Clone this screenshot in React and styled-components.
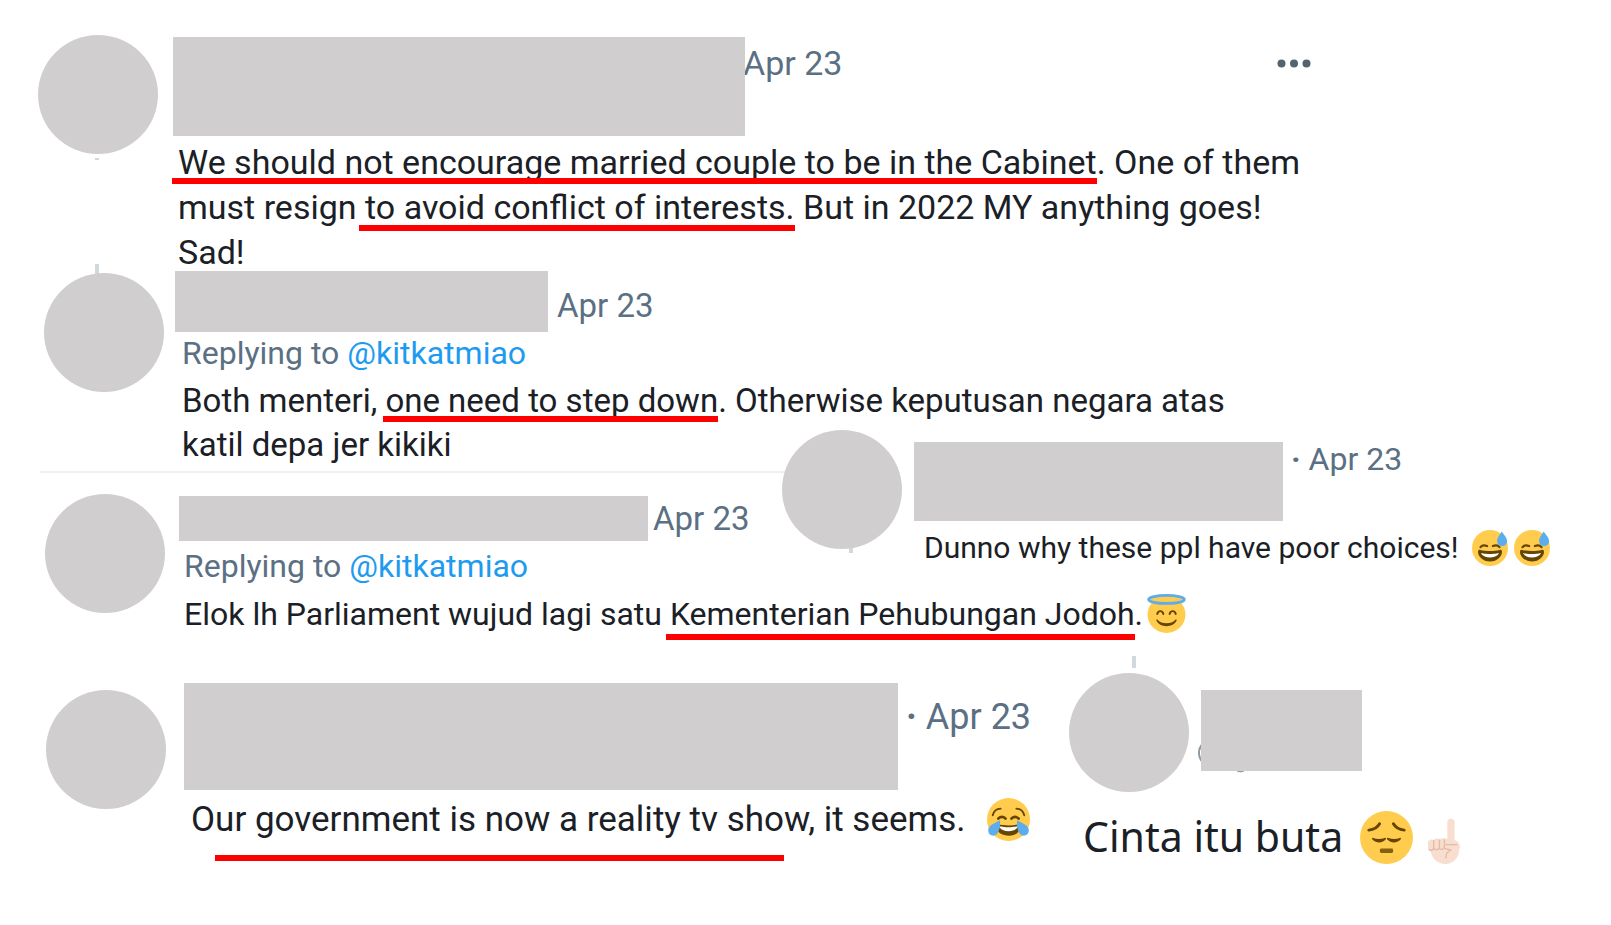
import React from 'react';
import styled, { createGlobalStyle } from 'styled-components';

const GlobalStyle = createGlobalStyle`
  *, *::before, *::after { box-sizing: border-box; }
  body { margin: 0; background: #fff; }
`;

const Page = styled.main`
  display: flex;
  flex-direction: column;
  min-height: 100vh;
  padding-top: 35px;
  overflow-x: hidden;
  font-family: Roboto, "Liberation Sans", sans-serif;
  color: #1a2026;
`;

const Overlay = styled.div`
  display: grid;
  align-items: start;
  justify-items: start;
  & > * { grid-area: 1 / 1; }
`;

const Row = styled.div`
  display: flex;
  align-items: flex-start;
`;

const Tweet = styled.article`
  display: flex;
  align-items: flex-start;
  gap: ${(p) => p.$gap}px;
  max-width: 1273px;
  margin-top: ${(p) => p.$top || 0}px;
  margin-left: ${(p) => p.$left}px;
`;

const StackedTweet = styled(Tweet)`
  flex-direction: column;
`;

const Body = styled.div`
  flex: 1;
  margin-top: ${(p) => p.$top || 0}px;
`;

const Head = styled.header`
  display: flex;
  align-items: flex-start;
`;

const AvatarSlot = styled.div`
  position: relative;
  flex: none;
  margin-top: ${(p) => p.$top || 0}px;
`;

const Avatar = styled.div`
  position: relative;
  width: 120px;
  height: 119px;
  border-radius: 50%;
  background: #d0cece;
`;

const Stem = styled.span`
  position: absolute;
  left: ${(p) => p.$x}px;
  top: ${(p) => p.$y}px;
  width: 4px;
  height: ${(p) => p.$h}px;
  background: #cfd9de;
`;

const NameSlot = styled.div`
  position: relative;
  flex: none;
  margin: 17px 0 0 12px;
`;

const NameBar = styled.div`
  position: relative;
  z-index: 1;
  flex: none;
  width: ${(p) => p.$w}px;
  height: ${(p) => p.$h}px;
  background: #d0cece;
`;

const HandleEdge = styled.svg`
  position: absolute;
  left: -3px;
  top: 50px;
  width: 60px;
  height: 33px;
`;

const When = styled.time`
  margin: ${(p) => p.$top}px 0 0 ${(p) => p.$left}px;
  font-size: ${(p) => p.$size || 33}px;
  line-height: 44px;
  white-space: nowrap;
  color: #5b7083;
`;

const MoreButton = styled.button`
  display: flex;
  margin: 22px 0 0 auto;
  padding: 0;
  border: 0;
  background: none;
  color: #536471;
`;

const ReplyTo = styled.p`
  margin: ${(p) => p.$top || 0}px 0 4px;
  padding-left: ${(p) => p.$indent}px;
  font-size: 32px;
  line-height: 44px;
  white-space: nowrap;
  color: #5b7083;
  a { color: #1d9bf0; text-decoration: none; }
`;

const Text = styled.p`
  margin: ${(p) => p.$top || 0}px 0 0;
  padding-left: ${(p) => p.$indent}px;
  font-size: ${(p) => p.$size}px;
  line-height: ${(p) => p.$line || 44}px;
  white-space: nowrap;
`;

const LargeText = styled(Text)`
  font-family: "Noto Sans", "Open Sans", sans-serif;
`;

const Marked = styled.span`
  position: relative;
  display: inline-block;
  &::after {
    content: "";
    position: absolute;
    left: -${(p) => p.$lead || 0}px;
    right: 0;
    top: ${(p) => p.$drop}px;
    height: 6px;
    background: #fe0000;
  }
`;

const Divider = styled.hr`
  width: 745px;
  height: 2px;
  margin: 4px 0 0 40px;
  border: 0;
  background: #ebf0f1;
`;

const Emoji = styled.svg`
  width: ${(p) => p.$s}px;
  height: ${(p) => p.$s}px;
  margin-left: ${(p) => p.$left || 0}px;
  vertical-align: ${(p) => p.$drop || -8}px;
`;

const Grin = (props) => (
  <Emoji viewBox="0 0 36 36" role="img" aria-label="grinning face with sweat" {...props}>
    <circle cx="18" cy="18" r="18" fill="#ffcc4d" />
    <path fill="none" stroke="#664500" strokeWidth="2.2" strokeLinecap="round" d="M8.500 17.200c1.200-1.700 3.200-2.600 6.600-1.200M20.900 16c3.400-1.400 5.400-.5 6.600 1.200" />
    <path fill="#664500" d="M18 21c-3.600 0-6.500-.4-9.900-1.100-.8-.1-2.100 0-2.100 2 0 4 4.600 9.600 12 9.600s12-5.600 12-9.600c0-2-1.300-2.100-2.100-2C24.500 20.600 21.600 21 18 21z" />
    <path fill="#fff" d="M9 23s3 1 9 1 9-1 9-1-1.500 4.500-9 4.500S9 23 9 23z" />
    <path fill="#5dadec" d="M35 10.200c.5 3-1.300 5.400-4.200 5.900-2.900.4-5.300-1.400-5.700-4.300C24.600 8.500 27.600 5.600 29.600 1.600c2.400 3.200 5 5.800 5.400 8.600z" />
  </Emoji>
);

const Angel = (props) => (
  <Emoji viewBox="0 0 36 36" role="img" aria-label="smiling face with halo" {...props}>
    <ellipse cx="18" cy="19" rx="17.500" ry="17" fill="#ffcc4d" />
    <ellipse cx="18" cy="5" rx="16.500" ry="3.700" fill="#ffcc4d" stroke="#5dadec" strokeWidth="2.600" />
    <path fill="none" stroke="#664500" strokeWidth="1.800" strokeLinecap="round" d="M9.500 18.500c.7-3.600 4.900-3.600 5.600 0M20.900 18.500c.7-3.600 4.900-3.600 5.600 0" />
    <path fill="#664500" d="M10 24c-.5-.8-1.700-.2-1.300.7C10.300 27.900 13.500 29.700 18 29.700s7.700-1.800 9.300-5c.4-.9-.8-1.500-1.300-.7-1.700 2-4.500 3-8 3s-6.300-1-8-3z" />
  </Emoji>
);

const Joy = (props) => (
  <Emoji viewBox="0 0 36 36" role="img" aria-label="face with tears of joy" {...props}>
    <circle cx="18" cy="18" r="18" fill="#ffcc4d" />
    <path fill="none" stroke="#664500" strokeWidth="1.500" strokeLinecap="round" d="M4.800 14.500c.7-3 3.200-5.500 6.600-5.600M31.200 14.500c-.7-3-3.200-5.500-6.600-5.600" />
    <path fill="none" stroke="#664500" strokeWidth="2.200" strokeLinecap="round" d="M9.500 17.200c2-1.800 4-1.800 6 0M20.500 17.200c2-1.800 4-1.800 6 0" />
    <path fill="#664500" d="M8.500 22C12 22.600 15 23 18 23s6-.4 9.500-1c1.500 0 1.500 9.500-9.500 9.500S7 22 8.500 22z" />
    <path fill="#fff" d="M10 23.500s3 1 8 1 8-1 8-1-1 4.300-8 4.300-8-4.300-8-4.300z" />
    <path fill="#5dadec" d="M10.800 18.600c.6 5-.8 12.900-5.400 12.900-3 0-4.800-2.400-4.300-5.300.7-3.700 5.500-5.200 9.700-7.600zM25.200 18.600c-.6 5 .8 12.900 5.400 12.900 3 0 4.800-2.400 4.300-5.300-.7-3.700-5.500-5.200-9.700-7.600z" />
  </Emoji>
);

const Pensive = (props) => (
  <Emoji viewBox="0 0 36 36" role="img" aria-label="pensive face" {...props}>
    <circle cx="18" cy="18" r="18" fill="#ffcc4d" />
    <path fill="none" stroke="#664500" strokeWidth="2" strokeLinecap="round" d="M6 13c3.500-.3 6-2 7.300-4.300M30 13c-3.500-.3-6-2-7.300-4.300" />
    <path fill="#664500" d="M9 18.300c2.200 1 5.300 1 7.800 0 .8-.3 1.200.5.600 1.100-2.500 2.600-6 2.600-8.800.2-.7-.6-.5-1.600.4-1.300zM27 18.300c-2.200 1-5.300 1-7.800 0-.8-.3-1.200.5-.6 1.100 2.500 2.600 6 2.600 8.800.2.700-.6.500-1.600-.4-1.300z" />
    <rect x="13.500" y="25.500" width="9" height="3" rx="1" fill="#664500" opacity=".8" />
  </Emoji>
);

const PointUp = (props) => (
  <Emoji viewBox="0 0 36 36" role="img" aria-label="index pointing up" {...props}>
    <path fill="#f7dece" d="M20.500 17V4.800a2.700 2.700 0 0 1 5.400 0V18c2.300.8 4 2.700 4 5.200 0 .8-.3 1.400-.6 2C29.600 31.500 25 36 19 36c-5.500 0-10-3.500-11-9.500-1.300-.8-2-2-2-3.600v-2.700c0-2 2.400-3.300 4.300-2.200.8-1.400 3.300-1.500 4.300-.2 1.200-1.500 4-1.300 5.900-.8z" />
    <path fill="none" stroke="#e6b8a5" strokeWidth="1" strokeLinecap="round" strokeLinejoin="round" d="M10.300 18.500v5.200c0 2-2.300 2.600-3.500 1.400M14.600 18v5.500c0 2.200-3.200 2.200-4.200.7M18.300 18v2.500M15 24.500c1 .8 2.800.6 3.500-.5M27.500 21.500h-8.300c-2 0-1.400 2.700.3 3.200l3.700.8c-2.400 1-4 3.200-3.700 6" />
  </Emoji>
);

const Dots = () => (
  <svg width="34" height="9" viewBox="0 0 34 9" fill="currentColor" aria-hidden="true">
    <circle cx="4.500" cy="4.500" r="4" />
    <circle cx="17" cy="4.500" r="4" />
    <circle cx="29.500" cy="4.500" r="4" />
  </svg>
);

export default function App() {
  return (
    <>
      <GlobalStyle />
      <Page>
        <Tweet $left={38} $gap={15}>
          <AvatarSlot>
            <Avatar />
            <Stem $x={57} $y={123} $h={2} />
          </AvatarSlot>
          <Body $top={2}>
            <Head>
              <NameBar $w={572} $h={99} />
              <When $top={4} $left={-2} $size={34}>Apr 23</When>
              <MoreButton type="button" aria-label="More"><Dots /></MoreButton>
            </Head>
            <Text $top={4} $indent={5} $size={34} $line={45}>
              <Marked $lead={6} $drop={38}>We should not encourage married couple to be in the Cabinet</Marked>. One of them<br />
              must resign <Marked $lead={6} $drop={40}>to avoid conflict of interests.</Marked> But in 2022 MY anything goes!<br />
              Sad!
            </Text>
          </Body>
        </Tweet>

        <Overlay>
          <div>
            <Tweet $top={-4} $left={44} $gap={11}>
              <AvatarSlot $top={2}>
                <Stem $x={51} $y={-9} $h={14} />
                <Avatar />
              </AvatarSlot>
              <Body>
                <Head>
                  <NameBar $w={373} $h={61} />
                  <When $top={13} $left={9}>Apr 23</When>
                </Head>
                <ReplyTo $top={-1} $indent={7}>Replying to <a href="#kitkatmiao">@kitkatmiao</a></ReplyTo>
                <Text $indent={7} $size={33}>
                  Both menteri, <Marked $lead={2} $drop={37}>one need to step down</Marked>. Otherwise keputusan negara atas<br />
                  katil depa jer kikiki
                </Text>
              </Body>
            </Tweet>
            <Divider />
            <Tweet $top={21} $left={45} $gap={14}>
              <AvatarSlot><Avatar /></AvatarSlot>
              <Body $top={2}>
                <Head>
                  <NameBar $w={469} $h={45} />
                  <When $top={1} $left={5}>Apr 23</When>
                </Head>
                <ReplyTo $top={3} $indent={5}>Replying to <a href="#kitkatmiao">@kitkatmiao</a></ReplyTo>
                <Text $indent={5} $size={32}>
                  Elok lh Parliament wujud lagi satu <Marked $lead={4} $drop={42}>Kementerian Pehubungan Jodoh</Marked>.<Angel $s={39} $left={4} />
                </Text>
              </Body>
            </Tweet>
          </div>
          <Tweet $top={155} $left={782} $gap={12}>
            <AvatarSlot>
              <Stem $x={67} $y={115} $h={8} />
              <Avatar />
            </AvatarSlot>
            <Body $top={12}>
              <Head>
                <NameBar $w={369} $h={79} />
                <When $top={-5} $left={8} $size={32}><b>·</b> Apr 23</When>
              </Head>
              <Text $top={5} $indent={10} $size={30}>
                Dunno why these ppl have poor choices! <Grin $s={36} $left={6} /><Grin $s={36} $left={6} />
              </Text>
            </Body>
          </Tweet>
        </Overlay>

        <Row>
          <Tweet $top={47} $left={46} $gap={18}>
            <AvatarSlot $top={7}><Avatar /></AvatarSlot>
            <Body>
              <Head>
                <NameBar $w={714} $h={107} />
                <When $top={12} $left={8} $size={36}><b>·</b> Apr 23</When>
              </Head>
              <Text $top={8} $indent={7} $size={35}>
                O<Marked $drop={57}>ur government is now a reality tv sho</Marked>w, it seems. <Joy $s={43} $left={13} $drop={-10} />
              </Text>
            </Body>
          </Tweet>
          <StackedTweet $top={37} $left={38} $gap={16}>
            <Head>
              <AvatarSlot>
                <Avatar />
                <Stem $x={63} $y={-17} $h={12} />
              </AvatarSlot>
              <NameSlot>
                <HandleEdge viewBox="0 0 60 33" fill="none" stroke="#8b9aa5" strokeWidth="2" aria-hidden="true">
                  <circle cx="14" cy="13" r="13" />
                  <path d="M38 29c2 3 7 3 9 0" />
                </HandleEdge>
                <NameBar $w={161} $h={81} />
              </NameSlot>
            </Head>
            <LargeText $indent={14} $size={41} $line={56}>
              Cinta itu buta <Pensive $s={53} $left={6} $drop={-12} /><PointUp $s={48} $left={7} $drop={-12} />
            </LargeText>
          </StackedTweet>
        </Row>
      </Page>
    </>
  );
}
